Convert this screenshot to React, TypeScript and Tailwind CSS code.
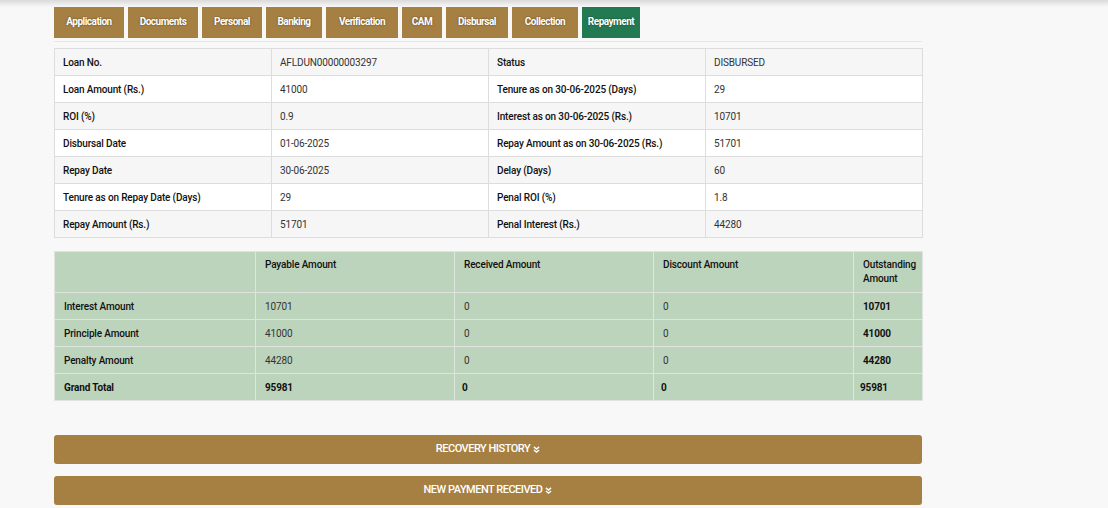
import React from "react";

const tabs: { label: string; w: number; active?: boolean }[] = [
  { label: "Application", w: 70 },
  { label: "Documents", w: 70 },
  { label: "Personal", w: 60 },
  { label: "Banking", w: 56 },
  { label: "Verification", w: 72 },
  { label: "CAM", w: 40 },
  { label: "Disbursal", w: 62 },
  { label: "Collection", w: 66 },
  { label: "Repayment", w: 58, active: true },
];

const info: [string, string, string, string][] = [
  ["Loan No.", "AFLDUN00000003297", "Status", "DISBURSED"],
  ["Loan Amount (Rs.)", "41000", "Tenure as on 30-06-2025 (Days)", "29"],
  ["ROI (%)", "0.9", "Interest as on 30-06-2025 (Rs.)", "10701"],
  ["Disbursal Date", "01-06-2025", "Repay Amount as on 30-06-2025 (Rs.)", "51701"],
  ["Repay Date", "30-06-2025", "Delay (Days)", "60"],
  ["Tenure as on Repay Date (Days)", "29", "Penal ROI (%)", "1.8"],
  ["Repay Amount (Rs.)", "51701", "Penal Interest (Rs.)", "44280"],
];

const amounts: [string, string, string, string, string][] = [
  ["Interest Amount", "10701", "0", "0", "10701"],
  ["Principle Amount", "41000", "0", "0", "41000"],
  ["Penalty Amount", "44280", "0", "0", "44280"],
];

function DoubleChevron() {
  return (
    <svg width="7" height="7" viewBox="0 0 8 8" className="ml-[3px] inline-block" fill="none">
      <path d="M1 1 L4 3.5 L7 1" stroke="white" strokeWidth="1.5" />
      <path d="M1 4.5 L4 7 L7 4.5" stroke="white" strokeWidth="1.5" />
    </svg>
  );
}

function Accordion({ label }: { label: string }) {
  return (
    <div className="h-[29px] rounded-[3px] bg-[#a68042] flex items-center justify-center text-white text-[11px] font-medium tracking-[-0.5px]">
      <span>{label}</span>
      <DoubleChevron />
    </div>
  );
}

export default function App() {
  const td1 = "border border-[#dddddd] px-[8px] py-[6px] leading-[13px] h-[27px] align-middle";
  const td2 = "border border-[#dfe5de] pl-[9px] pr-[6px] py-[6px] leading-[13px] h-[27px] align-middle";
  return (
    <div className="min-h-screen bg-[#f8f8f8] font-['Roboto','Liberation_Sans',sans-serif] text-[#222]">
      <div className="h-[7px] bg-gradient-to-b from-[#dadada] to-[#f8f8f8]" />
      <div className="ml-[54px] w-[868px]">
        <div className="flex gap-[4px] pb-[3px] border-b border-[#e6e6e6]">
          {tabs.map((t) => (
            <div
              key={t.label}
              style={{ width: t.w }}
              className={`h-[31px] pb-[2px] flex items-center justify-center text-white text-[10px] font-bold tracking-[-0.5px] [text-shadow:0_0_2px_rgba(0,0,0,0.5)] ${
                t.active ? "bg-[#237a52]" : "bg-[#a68042]"
              }`}
            >
              {t.label}
            </div>
          ))}
        </div>

        <table className="mt-[6px] w-[868px] table-fixed border-collapse text-[10px] tracking-[-0.15px]">
          <colgroup>
            <col className="w-[217px]" />
            <col className="w-[217px]" />
            <col className="w-[217px]" />
            <col className="w-[217px]" />
          </colgroup>
          <tbody>
            {info.map((r, i) => (
              <tr key={i} className={i % 2 === 0 ? "bg-[#f6f6f6]" : "bg-white"}>
                <td className={`${td1} font-medium text-[#111]`}>{r[0]}</td>
                <td className={`${td1} text-[#333]`}>{r[1]}</td>
                <td className={`${td1} font-medium text-[#111]`}>{r[2]}</td>
                <td className={`${td1} text-[#333]`}>{r[3]}</td>
              </tr>
            ))}
          </tbody>
        </table>

        <table className="mt-[13px] w-[868px] table-fixed border-collapse text-[10px] tracking-[-0.15px] bg-[#bdd4bc]">
          <colgroup>
            <col className="w-[201px]" />
            <col className="w-[199px]" />
            <col className="w-[199px]" />
            <col className="w-[200px]" />
            <col className="w-[69px]" />
          </colgroup>
          <thead>
            <tr>
              <th className="border border-[#dfe5de] h-[41px]" />
              {["Payable Amount", "Received Amount", "Discount Amount", "Outstanding Amount"].map((h) => (
                <th
                  key={h}
                  className="border border-[#dfe5de] pl-[9px] pr-[4px] py-[6px] leading-[14px] text-left align-top font-medium text-[#111]"
                >
                  {h}
                </th>
              ))}
            </tr>
          </thead>
          <tbody>
            {amounts.map((r) => (
              <tr key={r[0]}>
                <td className={`${td2} font-medium text-[#111]`}>{r[0]}</td>
                <td className={`${td2} text-[#333]`}>{r[1]}</td>
                <td className={`${td2} text-[#333]`}>{r[2]}</td>
                <td className={`${td2} text-[#333]`}>{r[3]}</td>
                <td className={`${td2} font-bold text-[#111]`}>{r[4]}</td>
              </tr>
            ))}
            <tr>
              <td className={`${td2} font-bold text-[#111]`}>Grand Total</td>
              <td className={`${td2} font-bold text-[#111]`}>95981</td>
              <td className="border border-[#dfe5de] pl-[7px] py-[6px] leading-[13px] h-[27px] font-bold text-[#111]">0</td>
              <td className="border border-[#dfe5de] pl-[7px] py-[6px] leading-[13px] h-[27px] font-bold text-[#111]">0</td>
              <td className="border border-[#dfe5de] pl-[6px] py-[6px] leading-[13px] h-[27px] font-bold text-[#111]">95981</td>
            </tr>
          </tbody>
        </table>

        <div className="mt-[34px]">
          <Accordion label="RECOVERY HISTORY" />
        </div>
        <div className="mt-[12px]">
          <Accordion label="NEW PAYMENT RECEIVED" />
        </div>
      </div>
    </div>
  );
}
